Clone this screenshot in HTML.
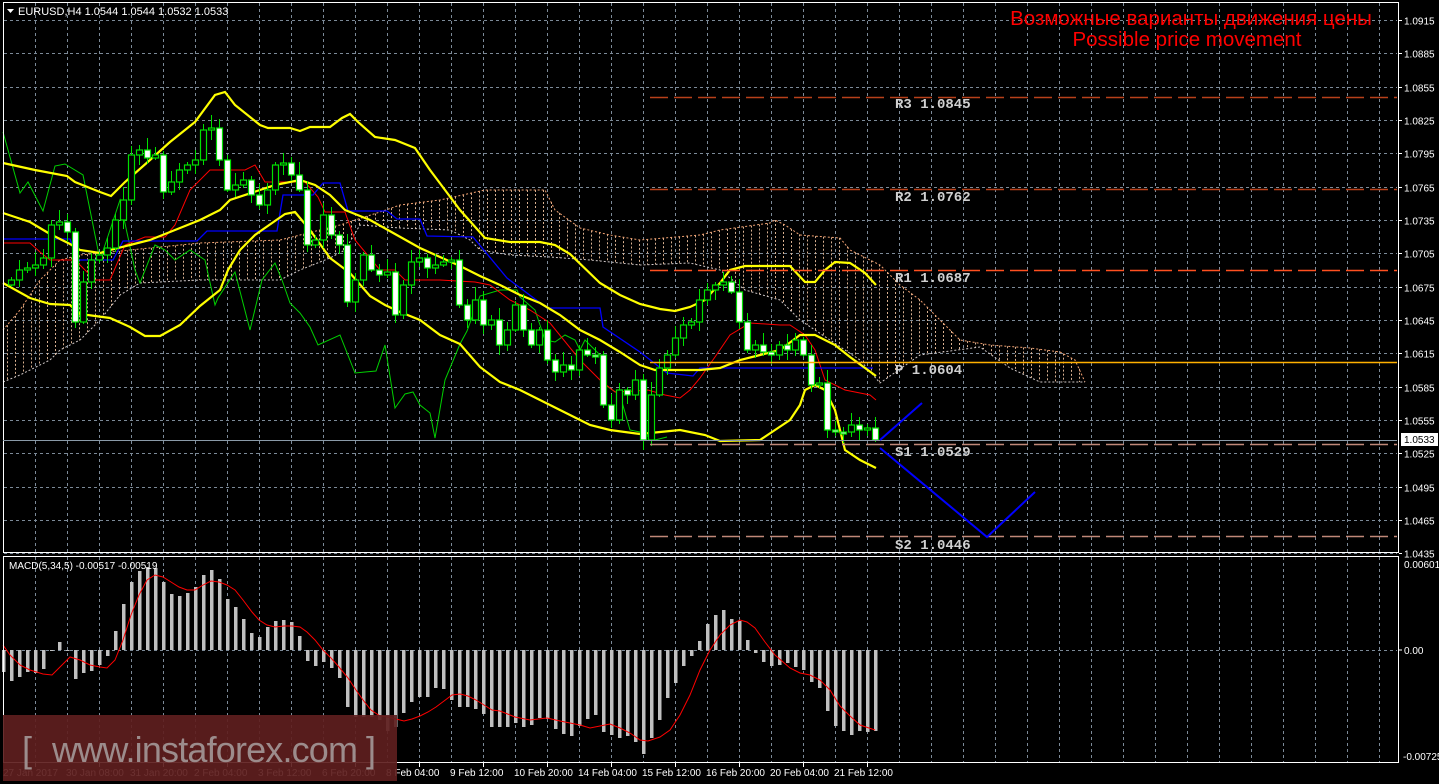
<!DOCTYPE html>
<html><head><meta charset="utf-8">
<style>
html,body{margin:0;padding:0;background:#000;}
body{width:1439px;height:784px;overflow:hidden;position:relative;font-family:"Liberation Sans",sans-serif;}
svg{position:absolute;left:0;top:0;}
.ax{font-family:"Liberation Sans",sans-serif;font-size:10px;fill:#fff;}
.dt{font-family:"Liberation Sans",sans-serif;font-size:10px;fill:#fff;}
.pv{font-family:"Liberation Mono",monospace;font-size:14px;font-weight:bold;fill:#d0d0d0;}
</style></head><body>
<svg id="s" width="1439" height="784" xmlns="http://www.w3.org/2000/svg">
<g id="grid" stroke="#7c8a98" stroke-width="1" stroke-dasharray="3,3" fill="none"></g>
<g id="cloud"></g>
<g id="lines" fill="none"></g>
<g id="candles"></g>
<g id="macd"></g>
<rect x="3.5" y="2.5" width="1395" height="550" fill="none" stroke="#fff"/>
<rect x="3.5" y="556.5" width="1395" height="206" fill="none" stroke="#fff"/>
<g stroke-dasharray="18,6" stroke-width="1.5" fill="none">
<line x1="650" y1="97.5" x2="1397" y2="97.5" stroke="#b8401a"/>
<line x1="650" y1="189.5" x2="1397" y2="189.5" stroke="#b8401a"/>
<line x1="650" y1="270.5" x2="1397" y2="270.5" stroke="#ff5020"/>
<line x1="650" y1="444.5" x2="1397" y2="444.5" stroke="#c08878"/>
<line x1="650" y1="536.5" x2="1397" y2="536.5" stroke="#c08878"/>
</g>
<line x1="650" y1="362.5" x2="1397" y2="362.5" stroke="#ffb000" stroke-width="1.5"/>
<line x1="3" y1="440.5" x2="1397" y2="440.5" stroke="#8a9aa8" stroke-width="1"/>
<text class="pv" x="895" y="108">R3 1.0845</text>
<text class="pv" x="895" y="201">R2 1.0762</text>
<text class="pv" x="895" y="282">R1 1.0687</text>
<text class="pv" x="895" y="374">P 1.0604</text>
<text class="pv" x="895" y="456">S1 1.0529</text>
<text class="pv" x="895" y="549">S2 1.0446</text>
<polyline points="880,440 922,403" stroke="#0000ff" stroke-width="2" fill="none"/>
<polyline points="880,448 987,537 1035,492" stroke="#0000ff" stroke-width="2" fill="none"/>
<text x="1191" y="25" text-anchor="middle" font-size="20.5" fill="#ff0000">Возможные варианты движения цены</text>
<text x="1187" y="46" text-anchor="middle" font-size="20.5" fill="#ff0000">Possible price movement</text>
<polygon points="7,9 14,9 10.5,13" fill="#fff"/>
<text x="18" y="15" font-size="11" fill="#fff">EURUSD,H4  1.0544 1.0544 1.0532 1.0533</text>
<text x="9" y="569" font-size="10" fill="#fff">MACD(5,34,5) -0.00517 -0.00519</text>
<g id="axis"></g>
<rect x="1401" y="433" width="37" height="13" fill="#fff"/>
<text x="1404" y="443" font-size="10" fill="#000">1.0533</text>
<text class="ax" x="1404" y="568">0.00601</text>
<text class="ax" x="1404" y="654">0.00</text>
<text class="ax" x="1403" y="760">-0.00725</text>
<line x1="1399" y1="650" x2="1402" y2="650" stroke="#fff"/>
<g id="dates"></g>
<rect x="3" y="715" width="394" height="66" fill="#5e1e1e" opacity="0.92"/>
<text x="22" y="762" font-size="36" fill="#9c8c8c">[</text>
<text x="52" y="762" font-size="36" fill="#9c8c8c" textLength="306">www.instaforex.com</text>
<text x="366" y="762" font-size="36" fill="#9c8c8c">]</text>
</svg>
<script>
(function(){
var NS="http://www.w3.org/2000/svg";
function el(p,t,a){var e=document.createElementNS(NS,t);for(var k in a)e.setAttribute(k,a[k]);p.appendChild(e);return e;}
var g=document.getElementById('grid');
for(var x=35;x<1397;x+=32){el(g,'line',{x1:x+.5,y1:3,x2:x+.5,y2:552});el(g,'line',{x1:x+.5,y1:557,x2:x+.5,y2:762});}
var ax=document.getElementById('axis');
for(var k=0;k<=16;k++){var y=Math.round(20+33.33*k)+.5;el(g,'line',{x1:4,y1:y,x2:1397,y2:y});
 var p=(1.0915-0.003*k).toFixed(4);
 var t=el(ax,'text',{'class':'ax',x:1404,y:y+4});t.textContent=p;
 el(ax,'line',{x1:1399,y1:y,x2:1402,y2:y,stroke:'#fff'});}
el(g,'line',{x1:4,y1:650.5,x2:1397,y2:650.5});
var d=document.getElementById('dates');
var dl=["27 Jan 2017","30 Jan 08:00","31 Jan 20:00","2 Feb 04:00","3 Feb 12:00","6 Feb 20:00","8 Feb 04:00","9 Feb 12:00","10 Feb 20:00","14 Feb 04:00","15 Feb 12:00","16 Feb 20:00","20 Feb 04:00","21 Feb 12:00"];
for(var i=0;i<dl.length;i++){var t=el(d,'text',{'class':'dt',x:(i==0?3:66+64*(i-1)),y:776});t.textContent=dl[i];el(d,'line',{x1:35+64*i+.5,y1:763,x2:35+64*i+.5,y2:767,stroke:'#fff'});}
var ctop=[[3,330],[20,310],[40,280],[60,260],[80,255],[130,250],[200,243],[280,240],[340,225],[380,212],[400,205],[440,200],[485,190],[545,190],[555,210],[580,228],[610,235],[640,240],[700,235],[720,230],[770,223],[775,220],[785,225],[800,235],[840,238],[850,250],[880,265],[900,285],[920,300],[940,320],[960,340],[990,345],[1030,348],[1060,352],[1075,360],[1085,382]];
var cbot=[[3,382],[20,375],[50,360],[60,350],[80,340],[100,320],[120,295],[140,283],[200,280],[280,280],[300,270],[330,258],[345,250],[360,225],[400,228],[450,230],[470,240],[480,250],[510,255],[550,257],[590,260],[640,265],[690,263],[720,270],[745,290],[780,300],[800,320],[830,340],[860,360],[880,383],[920,355],[980,347],[1010,368],[1040,382],[1085,382]];
function interp(a,x){for(var i=1;i<a.length;i++){if(x<=a[i][0]){var t=(x-a[i-1][0])/(a[i][0]-a[i-1][0]);return a[i-1][1]+t*(a[i][1]-a[i-1][1]);}}return a[a.length-1][1];}
var c=document.getElementById('cloud');
for(var x=7;x<1085;x+=8){var y1=interp(ctop,x),y2=interp(cbot,x);el(c,'line',{x1:x+.5,y1:Math.min(y1,y2),x2:x+.5,y2:Math.max(y1,y2),stroke:'#d8b090','stroke-dasharray':'2,2','stroke-width':1});}
function pl(a){return a.map(function(p){return p.join(',')}).join(' ');}
el(c,'polyline',{points:pl(ctop),fill:'none',stroke:'#f0a070','stroke-dasharray':'2,2'});
el(c,'polyline',{points:pl(cbot),fill:'none',stroke:'#d0c8c8','stroke-dasharray':'2,2'});
var L=document.getElementById('lines');
var up=[[3,163],[35,170],[67,176],[75,182],[100,192],[111,196],[125,182],[150,160],[170,142],[195,122],[215,95],[225,92],[235,105],[260,125],[268,128],[290,128],[300,131],[310,127],[330,127],[342,118],[350,114],[358,122],[375,137],[395,140],[415,148],[430,170],[445,190],[460,210],[485,238],[510,242],[540,242],[555,245],[570,254],[600,283],[620,295],[640,304],[660,309],[675,311],[690,307],[705,300],[720,283],[730,270],[745,266],[790,266],[805,282],[815,282],[825,270],[835,262],[850,263],[865,273],[876,285]];
var mid=[[3,213],[30,222],[50,234],[70,244],[80,250],[100,253],[110,250],[130,245],[150,240],[200,220],[220,210],[230,200],[260,190],[275,185],[300,180],[315,185],[330,195],[345,210],[370,220],[395,234],[420,248],[440,257],[460,266],[480,276],[500,285],[520,295],[540,303],[560,315],[580,330],[600,340],[620,352],[640,365],[655,370],[670,370],[700,370],[720,368],[740,360],[760,355],[780,350],[800,335],[815,335],[835,345],[850,357],[876,376]];
var lo=[[3,283],[30,298],[50,304],[70,305],[80,314],[110,318],[130,327],[145,336],[160,336],[180,325],[200,306],[220,290],[228,270],[240,250],[255,235],[262,230],[285,214],[295,212],[310,230],[330,258],[350,273],[370,296],[385,305],[400,312],[420,320],[440,335],[460,344],[480,367],[500,382],[520,390],[560,410],[590,425],[610,430],[640,434],[660,432],[680,430],[705,435],[720,441],[760,440],[775,430],[790,420],[800,405],[805,390],[815,385],[825,390],[835,410],[845,450],[860,460],[876,468]];
var red=[[3,243],[30,243],[40,252],[50,260],[75,260],[95,280],[110,280],[125,245],[145,237],[165,237],[175,225],[190,190],[210,170],[245,170],[255,165],[265,182],[305,182],[318,197],[325,212],[345,212],[355,240],[365,252],[380,270],[395,270],[405,280],[440,280],[475,282],[490,285],[510,300],[530,310],[550,323],[580,360],[600,380],[615,392],[635,391],[648,390],[665,395],[680,398],[690,390],[700,378],[715,357],[730,335],[750,323],[780,325],[790,325],[805,335],[815,350],[825,380],[845,390],[870,395],[876,400]];
var blue=[[3,239],[70,239],[77,260],[113,260],[123,241],[197,241],[207,231],[277,231],[283,195],[313,195],[323,183],[340,183],[348,211],[387,211],[397,219],[420,219],[427,236],[473,237],[507,278],[547,308],[600,308],[603,327],[640,352],[667,373],[693,376],[700,368],[873,368]];
var green=[[3,132],[20,193],[28,182],[43,211],[55,166],[65,164],[83,175],[100,260],[110,230],[120,200],[135,270],[140,283],[155,245],[165,250],[175,260],[190,250],[205,260],[215,305],[218,298],[235,272],[250,330],[262,280],[275,263],[282,280],[290,303],[300,313],[310,327],[318,345],[340,335],[355,373],[365,372],[376,371],[385,345],[395,408],[405,394],[413,392],[420,405],[430,413],[435,438],[445,380],[460,344],[467,331],[480,296],[500,290],[517,290],[520,297],[535,310],[545,340],[555,342],[565,335],[575,340],[580,350],[585,340],[600,355],[605,385],[620,395],[630,430],[640,432],[655,440],[667,437]];
el(L,'polyline',{points:pl(green),stroke:'#00d000','stroke-width':1});
el(L,'polyline',{points:pl(red),stroke:'#ff0000','stroke-width':1});
el(L,'polyline',{points:pl(blue),stroke:'#0000ff','stroke-width':1.3});
[up,mid,lo].forEach(function(a){el(L,'polyline',{points:pl(a),stroke:'#ffff00','stroke-width':2.2});});
var cl=[280,270,268,265,258,225,222,232,322,282,260,255,248,220,200,155,150,158,155,192,182,170,165,160,130,128,160,190,185,180,195,205,190,165,163,175,190,245,240,215,235,245,302,280,255,270,275,272,315,285,262,258,268,265,262,260,305,320,300,325,320,345,330,305,330,345,330,360,372,365,370,350,355,355,405,420,390,395,380,440,395,368,355,338,325,322,300,290,285,282,292,322,350,345,352,355,345,350,340,355,385,383,430,432,432,425,430,428,440];
var C=document.getElementById('candles');
var prev=285;
for(var i=0;i<cl.length;i++){var x=11+8*i,o=prev,cc=cl[i];if(Math.abs(o-cc)<2){cc=o+2;}
 var hi=Math.min(o,cc)-(3+(i*7)%11),lw=Math.max(o,cc)+(2+(i*5)%9);
 el(C,'line',{x1:x+.5,y1:hi,x2:x+.5,y2:lw,stroke:'#00e000'});
 var bear=cc>o;
 el(C,'rect',{x:x-2.5,y:Math.min(o,cc),width:6,height:Math.abs(o-cc),fill:bear?'#fff':'#000',stroke:'#00e000','stroke-width':1.2});
 prev=cl[i];}
var M=document.getElementById('macd');
var mb=[672,681,677,672,673,669,651,642,651,679,673,671,665,656,631,604,582,571,567,568,582,594,596,593,587,575,570,579,599,607,619,633,637,627,621,620,622,636,661,666,662,668,678,707,717,717,717,720,731,727,713,702,697,697,688,689,700,707,707,709,714,727,
715,727,727,723,727,725,718,719,729,734,736,726,719,715,732,735,738,736,742,754,738,720,698,683,666,656,641,624,615,610,619,621,640,653,662,666,665,663,667,670,682,688,711,726,731,735,731,732,731];
for(var i=0;i<mb.length;i++){var x=(i<62?3+8*i:491+8*(i-62));var y=mb[i];
 el(M,'rect',{x:x-1,y:Math.min(650,y),width:3.5,height:Math.max(1,Math.abs(y-650)),fill:'#c0c0c0'});}
var sig=[[3,645],[10,655],[20,665],[30,670],[43,674],[52,675],[59,668],[67,660],[70,657],[80,660],[90,665],[100,667],[107,668],[115,660],[123,640],[131,615],[139,595],[147,580],[155,575],[163,577],[171,582],[179,587],[187,590],[195,590],[203,585],[211,581],[219,582],[227,585],[235,590],[243,600],[252,612],[259,620],[267,625],[275,627],[284,626],[292,626],[300,627],[307,632],[315,640],[323,650],[331,658],[339,667],[348,678],[356,690],[363,700],[371,710],[380,716],[388,717],[396,719],[404,721],[412,719],[420,716],[428,712],[436,707],[444,701],[452,695],[460,694],[468,696],[476,700],[484,705],[492,710],[500,711],[515,717],[530,720],[547,718],[560,721],[580,725],[590,728],[600,726],[610,724],[620,728],[630,733],[640,740],[648,741],[660,737],[670,730],[680,715],[690,695],[700,670],[710,650],[720,635],[730,625],[740,620],[747,622],[755,628],[765,642],[775,655],[790,668],[800,673],[810,675],[820,680],[830,690],[840,706],[850,716],[860,725],[875,730]];
el(M,'polyline',{points:pl(sig),fill:'none',stroke:'#ff0000','stroke-width':1});
})();
</script>
</body></html>
